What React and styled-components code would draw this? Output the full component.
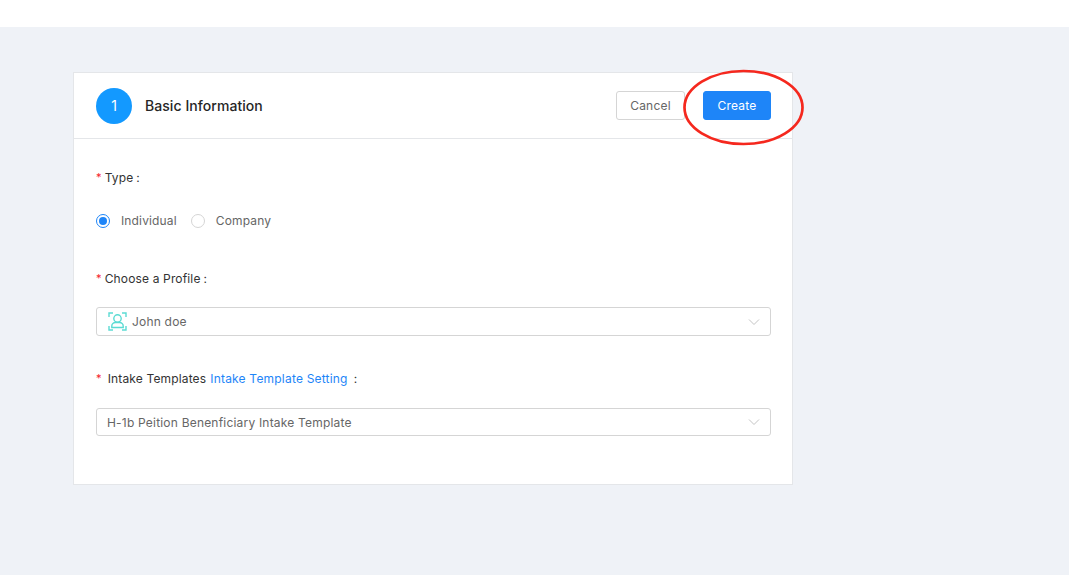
import React from "react";
import styled, { createGlobalStyle } from "styled-components";

const GlobalStyle = createGlobalStyle`
  html, body {
    margin: 0;
    padding: 0;
    background: #ffffff;
    font-family: Inter, "Noto Sans", "Liberation Sans", sans-serif;
  }
`;

const Page = styled.div`
  margin-top: 27px;
  height: 548px;
  margin-bottom: 13px;
  padding: 45px 0 0 73px;
  box-sizing: border-box;
  background: #eff2f7;
`;

const Card = styled.section`
  width: 720px;
  height: 413px;
  box-sizing: border-box;
  background: #ffffff;
  border: 1px solid #e4e6e9;
`;

const CardHeader = styled.header`
  display: flex;
  align-items: center;
  justify-content: space-between;
  height: 65px;
  padding: 0 21px 0 22px;
  border-bottom: 1px solid #e4e6e9;
`;

const HeaderTitle = styled.div`
  display: flex;
  align-items: center;
  gap: 13px;
`;

const StepBadge = styled.div`
  display: flex;
  align-items: center;
  justify-content: center;
  width: 36px;
  height: 36px;
  border-radius: 50%;
  background: #1399ff;
  color: #ffffff;
  font-size: 14px;
  font-weight: 400;
`;

const Title = styled.h2`
  margin: 0;
  font-size: 14px;
  font-weight: 450;
  letter-spacing: 0.06px;
  color: #262626;
`;

const Actions = styled.div`
  position: relative;
  display: flex;
  align-items: center;
  gap: 18px;
`;

const Button = styled.button`
  height: 29px;
  padding: 0;
  width: ${(p) => (p.$primary ? "68px" : "69px")};
  border-radius: 3px;
  border: 1px solid ${(p) => (p.$primary ? "#1e85f8" : "#d5d5d5")};
  background: ${(p) => (p.$primary ? "#1e85f8" : "#ffffff")};
  color: ${(p) => (p.$primary ? "#ffffff" : "#666666")};
  font-family: inherit;
  font-size: 12px;
  letter-spacing: 0.2px;
`;

const Annotation = styled.svg`
  position: absolute;
  left: 67px;
  top: -22px;
  width: 122px;
  height: 78px;
  overflow: visible;
  pointer-events: none;
`;

const CardBody = styled.div`
  display: flex;
  flex-direction: column;
  padding: 30px 21px 0 22px;
`;

const Label = styled.div`
  display: flex;
  align-items: center;
  height: 16px;
  font-size: 12px;
  color: #333333;
  letter-spacing: 0.15px;
`;

const Star = styled.span`
  color: #f5222d;
  margin-right: ${(p) => p.$gap || "3px"};
  font-size: 11px;
`;

const Colon = styled.span`
  margin-left: ${(p) => p.$gap || "3px"};
`;

const LinkText = styled.a`
  color: #1e85f8;
  margin-left: 4px;
  letter-spacing: 0.2px;
`;

const RadioRow = styled.div`
  display: flex;
  align-items: center;
  gap: 14px;
  height: 16px;
  margin: 28px 0 41px;
`;

const RadioOption = styled.label`
  display: flex;
  align-items: center;
  gap: 11px;
  font-size: 12px;
  color: #666666;
  letter-spacing: 0.15px;
`;

const RadioText = styled.span`
  margin-top: -2px;
`;

const RadioDot = styled.span`
  display: flex;
  align-items: center;
  justify-content: center;
  box-sizing: border-box;
  width: 14px;
  height: 14px;
  border-radius: 50%;
  border: 1px solid ${(p) => (p.$checked ? "#1e85f8" : "#d5d5d5")};
  &::after {
    content: "";
    display: ${(p) => (p.$checked ? "block" : "none")};
    width: 8px;
    height: 8px;
    border-radius: 50%;
    background: #1e85f8;
  }
`;

const Select = styled.div`
  display: flex;
  align-items: center;
  justify-content: space-between;
  box-sizing: border-box;
  height: ${(p) => p.$height || "29px"};
  margin: ${(p) => p.$margin};
  padding: 0 10px;
  border: 1px solid #d5d5d5;
  border-radius: 3px;
  font-size: 12px;
  color: #666666;
  letter-spacing: 0.2px;
`;

const SelectValue = styled.div`
  display: flex;
  align-items: center;
  gap: 5px;
`;

const IconSvg = styled.svg`
  margin-left: 1px;
`;

const Chevron = () => (
  <svg width="12" height="12" viewBox="0 0 12 12" fill="none" stroke="#c4c4c4" strokeWidth="1">
    <path d="M1 3.5 L6 8.5 L11 3.5" />
  </svg>
);

const ProfileIcon = () => (
  <IconSvg width="19" height="19" viewBox="0 0 19 19" fill="none" stroke="#5cdbd3" strokeWidth="1.4">
    <path d="M1 5 V1 H5 M14 1 H18 V5 M1 14 V18 H5 M14 18 H18 V14" />
    <circle cx="9.5" cy="6.5" r="3.7" />
    <path d="M3.8 15.5 V14 C3.8 12 5.5 10.5 7.5 10.5 H11.5 C13.5 10.5 15.2 12 15.2 14 V15.5 Z" />
  </IconSvg>
);

export default function App() {
  return (
    <>
      <GlobalStyle />
      <Page>
        <Card>
          <CardHeader>
            <HeaderTitle>
              <StepBadge>1</StepBadge>
              <Title>Basic Information</Title>
            </HeaderTitle>
            <Actions>
              <Button>Cancel</Button>
              <Button $primary>Create</Button>
              <Annotation viewBox="0 0 122 78">
                <ellipse cx="60.5" cy="38.5" rx="59" ry="36.5" fill="none" stroke="#f5281e" strokeWidth="2.7" />
              </Annotation>
            </Actions>
          </CardHeader>
          <CardBody>
            <Label>
              <Star>*</Star>Type<Colon>:</Colon>
            </Label>
            <RadioRow>
              <RadioOption>
                <RadioDot $checked />
                <RadioText>Individual</RadioText>
              </RadioOption>
              <RadioOption>
                <RadioDot />
                <RadioText>Company</RadioText>
              </RadioOption>
            </RadioRow>
            <Label>
              <Star>*</Star>Choose a Profile<Colon>:</Colon>
            </Label>
            <Select $margin="21px 0 34px">
              <SelectValue>
                <ProfileIcon />
                John doe
              </SelectValue>
              <Chevron />
            </Select>
            <Label>
              <Star $gap="6px">*</Star>Intake Templates
              <LinkText>Intake Template Setting</LinkText>
              <Colon $gap="6px">:</Colon>
            </Label>
            <Select $margin="22px 0 0" $height="28px">
              <SelectValue>H-1b Peition Benenficiary Intake Template</SelectValue>
              <Chevron />
            </Select>
          </CardBody>
        </Card>
      </Page>
    </>
  );
}
